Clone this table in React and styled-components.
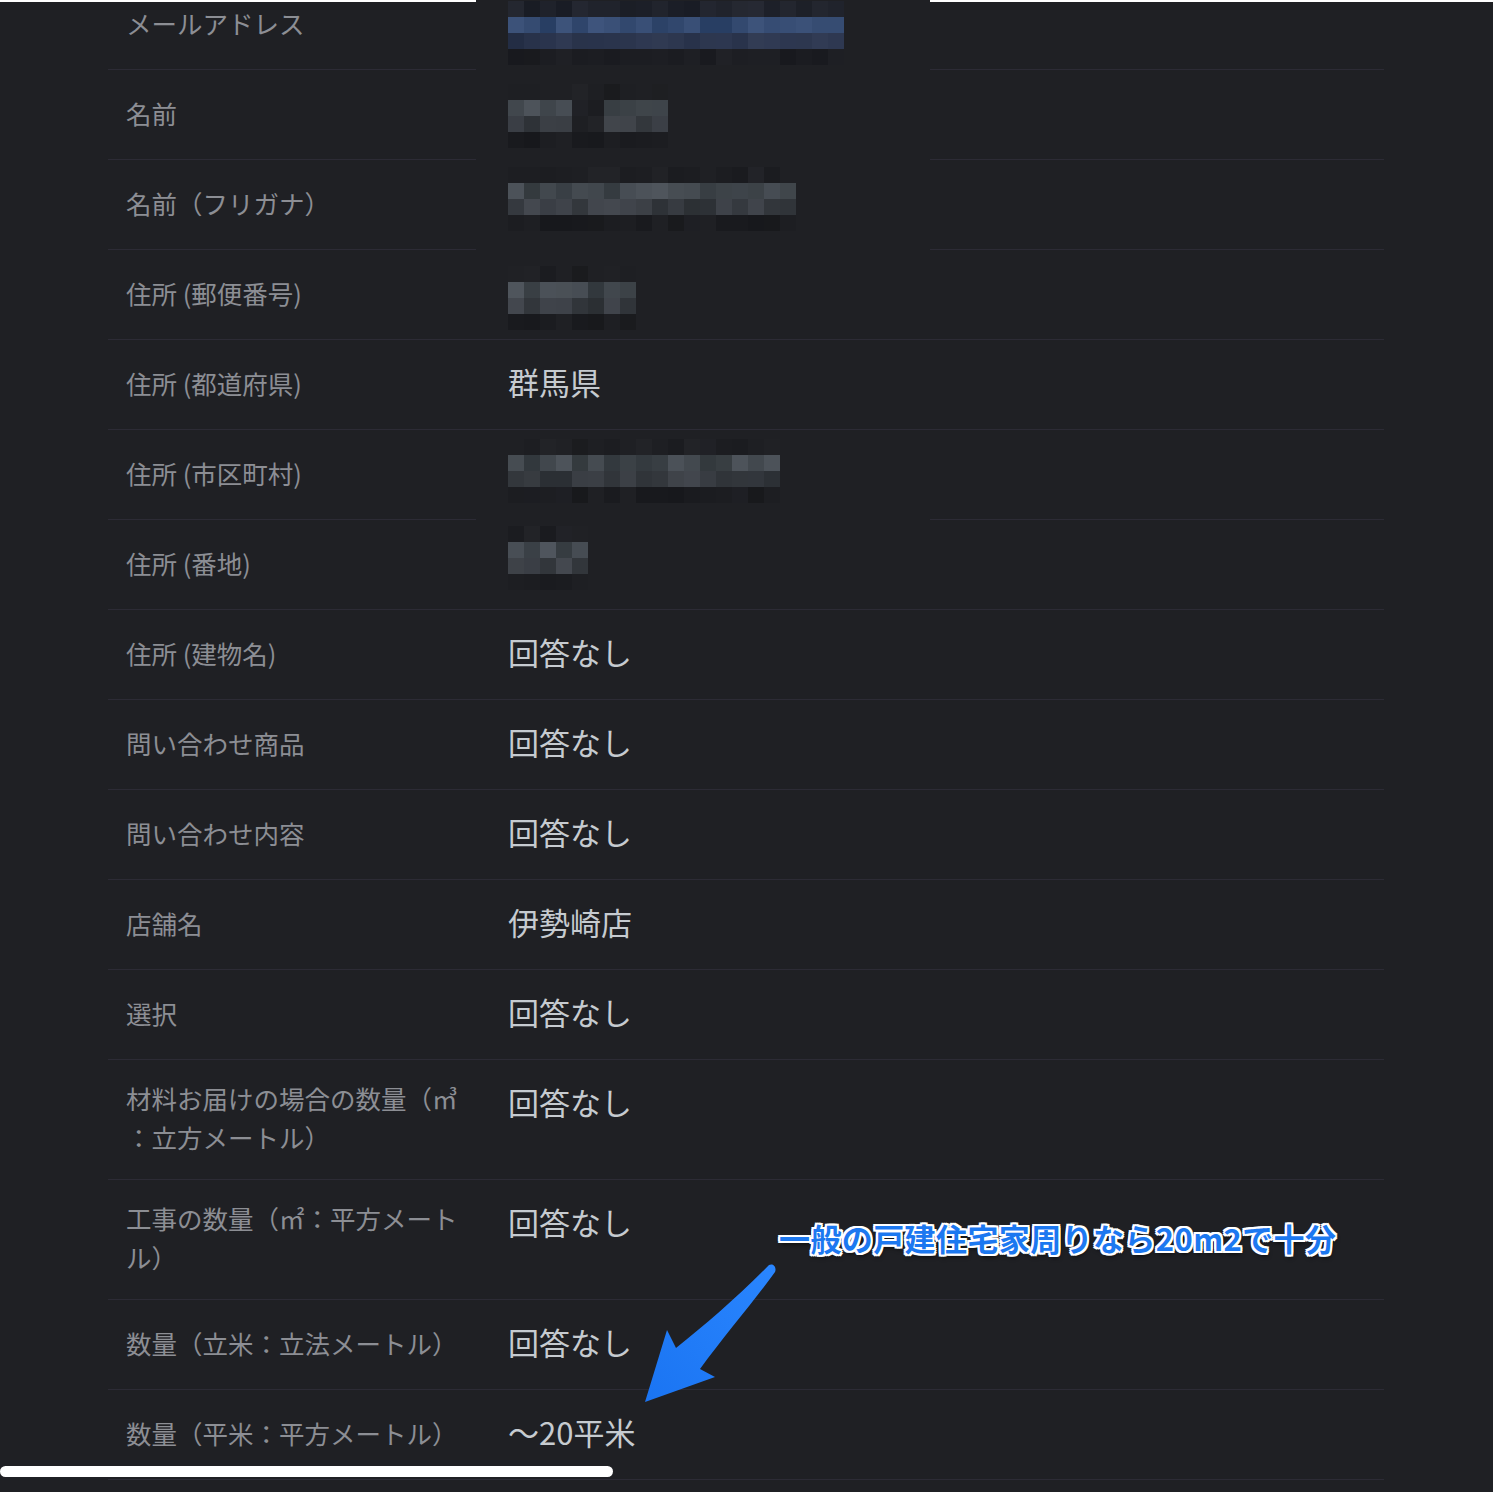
import React from "react";
import styled, { createGlobalStyle } from "styled-components";

const Global = createGlobalStyle`
  html, body { margin: 0; padding: 0; background: #1f2024; }
  body { font-family: "Noto Sans CJK JP", "Noto Sans", sans-serif; }
`;

const Page = styled.div`
  position: relative;
  width: 1493px;
  height: 1492px;
  overflow: hidden;
  background: #1f2024;
`;

const TopEdge = styled.div`
  height: 2px;
  background: linear-gradient(to right, #ffffff 0 476px, transparent 476px 930px, #ffffff 930px);
`;

const Table = styled.div`
  margin: -22px 0 0 108px;
  width: 1276px;
  display: flex;
  flex-direction: column;
`;

const SEP = "#2c2b35";

const Row = styled.div`
  display: grid;
  grid-template-columns: 368px 1fr;
  align-items: center;
  padding: 18px 0 24px;
  background-image: ${(p) =>
    p.$gap
      ? `linear-gradient(to right, ${SEP} 0 368px, transparent 368px 822px, ${SEP} 822px)`
      : `linear-gradient(${SEP}, ${SEP})`};
  background-repeat: no-repeat;
  background-position: left bottom;
  background-size: 100% 1px;
`;

const Label = styled.div`
  padding-left: 18px;
  width: 350px;
  font-size: 25.5px;
  line-height: 39px;
  color: #8c8e94;
  line-break: anywhere;
  word-break: break-all;
`;

const Value = styled.div`
  align-self: start;
  padding-left: 32px;
  font-size: 31px;
  line-height: 48px;
  color: #c6cbd0;
  height: 48px;
`;

const Censor = styled.div`
  display: grid;
  grid-template-columns: repeat(${(p) => p.$cols}, 16px);
  grid-auto-rows: 16px;
  margin-top: ${(p) => -8 + p.$shift}px;
  width: max-content;
`;

const Cell = styled.div``;

const Note = styled.div`
  position: absolute;
  left: 779px;
  top: 1218px;
  font-size: 31px;
  line-height: 40px;
  font-weight: 700;
  letter-spacing: 0.4px;
  color: #1c78f0;
  white-space: nowrap;
  text-shadow:
    2px 0 0 #fff, -2px 0 0 #fff, 0 2px 0 #fff, 0 -2px 0 #fff,
    2px 2px 0 #fff, -2px -2px 0 #fff, 2px -2px 0 #fff, -2px 2px 0 #fff,
    1px 3px 4px rgba(0, 0, 0, 0.7);
`;

const ArrowSvg = styled.svg`
  position: absolute;
  left: 630px;
  top: 1255px;
  width: 160px;
  height: 160px;
  overflow: visible;
`;

const Scrollbar = styled.div`
  position: absolute;
  left: 0;
  top: 1466px;
  width: 613px;
  height: 11px;
  border-radius: 6px;
  background: #ffffff;
`;

function rng(seed) {
  let a = seed >>> 0;
  return () => {
    a |= 0;
    a = (a + 0x6d2b79f5) | 0;
    let t = Math.imul(a ^ (a >>> 15), 1 | a);
    t = (t + Math.imul(t ^ (t >>> 7), 61 | t)) ^ t;
    return ((t ^ (t >>> 14)) >>> 0) / 4294967296;
  };
}

const TONES = {
  gray: [
    [30, 31, 35, 5],
    [66, 72, 78, 16],
    [56, 60, 66, 14],
    [27, 28, 32, 4],
  ],
  blue: [
    [32, 35, 44, 8],
    [52, 74, 112, 12],
    [42, 52, 76, 8],
    [28, 29, 34, 4],
  ],
};

function Masked({ cols, holes = [], tone, shift, seed }) {
  const r = rng(seed);
  const cells = [];
  const t = TONES[tone];
  for (let row = 0; row < 4; row++) {
    for (let c = 0; c < cols; c++) {
      const [R, G, B, v] = holes.includes(c) && (row === 1 || row === 2) ? [31, 32, 36, 4] : t[row];
      const d = (r() - 0.5) * 2 * v;
      const color = `rgb(${Math.round(R + d)}, ${Math.round(G + d)}, ${Math.round(B + d * 1.1)})`;
      cells.push(<Cell key={`${row}-${c}`} style={{ background: color }} />);
    }
  }
  return (
    <Censor $cols={cols} $shift={shift}>
      {cells}
    </Censor>
  );
}

const rows = [
  { label: "メールアドレス", mask: { cols: 21, tone: "blue", shift: 11, seed: 3 }, gap: true },
  { label: "名前", mask: { cols: 10, holes: [4, 5], tone: "gray", shift: 4, seed: 11 }, gap: true },
  { label: "名前（フリガナ）", mask: { cols: 18, tone: "gray", shift: -3, seed: 21 }, gap: true },
  { label: "住所 (郵便番号)", mask: { cols: 8, tone: "gray", shift: 6, seed: 5 } },
  { label: "住所 (都道府県)", value: "群馬県" },
  { label: "住所 (市区町村)", mask: { cols: 17, tone: "gray", shift: -1, seed: 42 }, gap: true },
  { label: "住所 (番地)", mask: { cols: 5, tone: "gray", shift: -4, seed: 9 } },
  { label: "住所 (建物名)", value: "回答なし" },
  { label: "問い合わせ商品", value: "回答なし" },
  { label: "問い合わせ内容", value: "回答なし" },
  { label: "店舗名", value: "伊勢崎店" },
  { label: "選択", value: "回答なし" },
  { label: "材料お届けの場合の数量（㎥：立方メートル）", value: "回答なし" },
  { label: "工事の数量（㎡：平方メートル）", value: "回答なし" },
  { label: "数量（立米：立法メートル）", value: "回答なし" },
  { label: "数量（平米：平方メートル）", value: "～20平米" },
];

export default function App() {
  return (
    <Page>
      <Global />
      <TopEdge />
      <Table>
        {rows.map((row) => (
          <Row key={row.label} $gap={row.gap}>
            <Label>{row.label}</Label>
            <Value>{row.mask ? <Masked {...row.mask} /> : row.value}</Value>
          </Row>
        ))}
      </Table>
      <Note>一般の戸建住宅家周りなら20m2で十分</Note>
      <ArrowSvg viewBox="0 0 160 160">
        <defs>
          <linearGradient id="ag" x1="1" y1="0" x2="0" y2="1">
            <stop offset="0" stopColor="#2a86ff" />
            <stop offset="1" stopColor="#1a74f2" />
          </linearGradient>
        </defs>
        <path
          d="M139 10 C 110 40, 75 70, 46 93 L 37 75 L 15 147 L 85 122 L 70 114 C 95 80, 125 45, 145 17 C 147 12, 143 8, 139 10 Z"
          fill="url(#ag)"
        />
      </ArrowSvg>
      <Scrollbar />
    </Page>
  );
}
